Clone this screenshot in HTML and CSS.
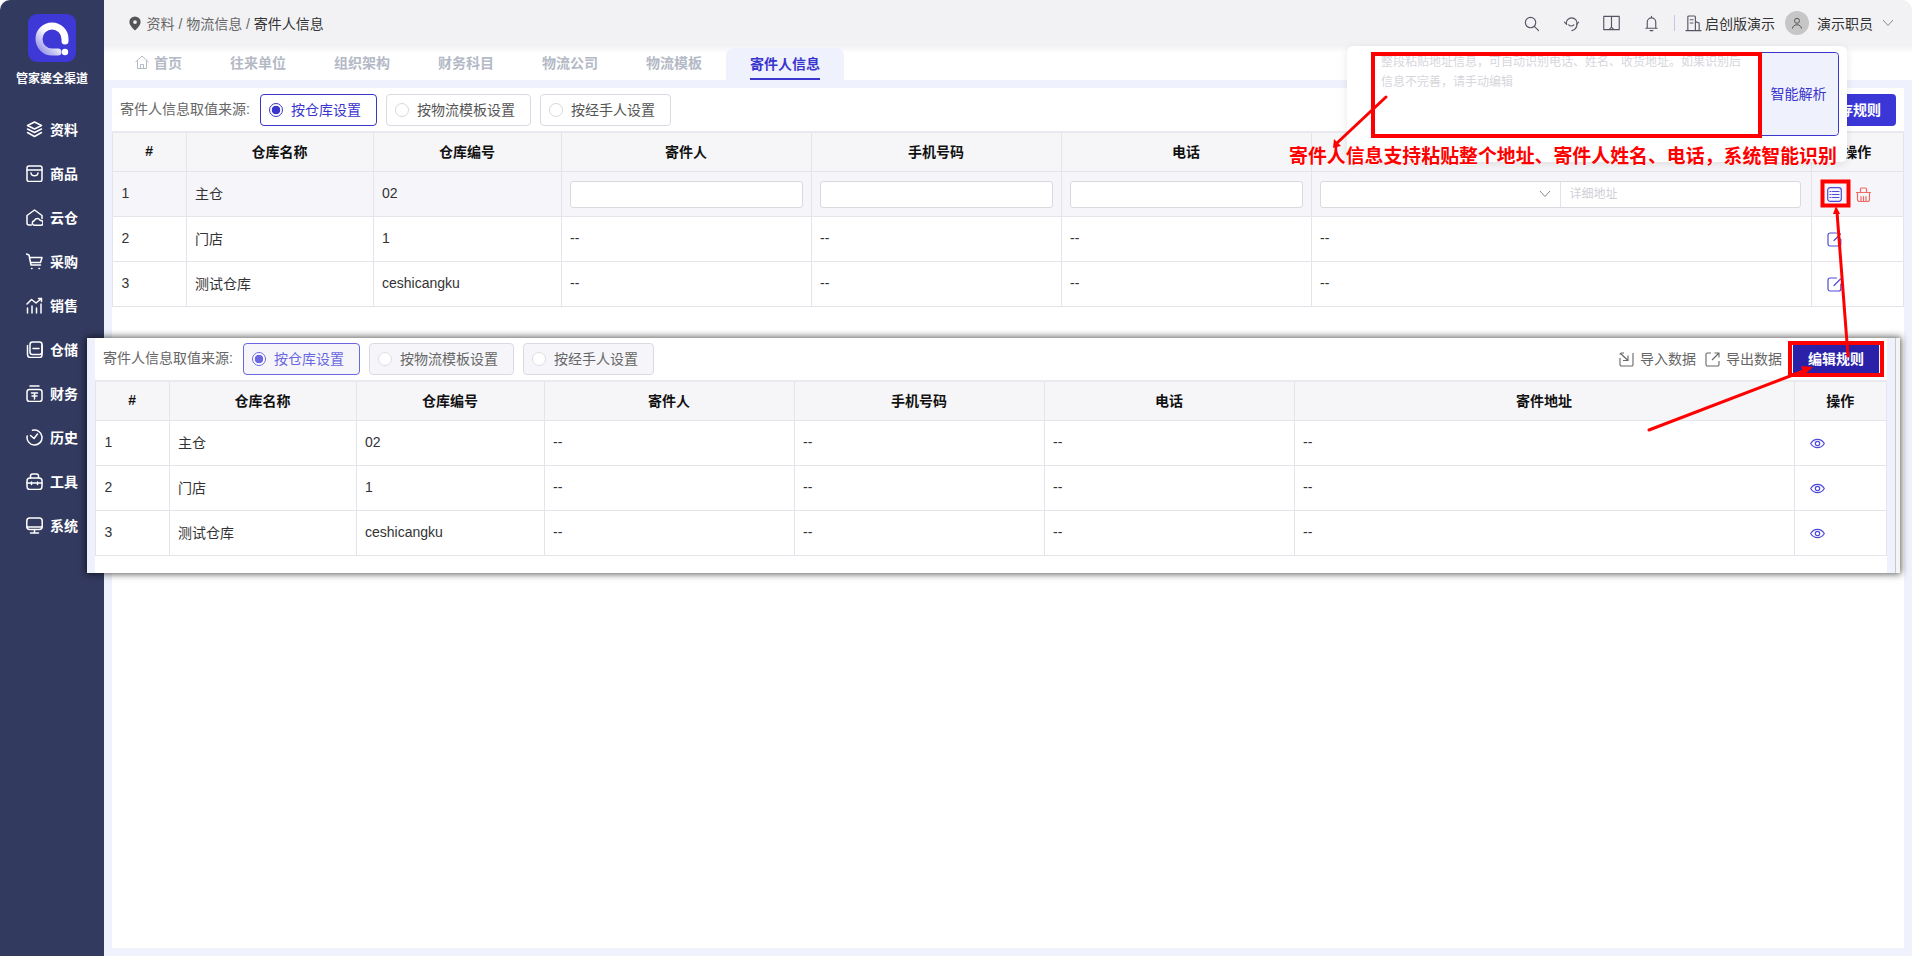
FILE: index.html
```html
<!DOCTYPE html>
<html lang="zh-CN">

<head>
    <meta charset="UTF-8">
    <meta name="viewport" content="width=device-width, initial-scale=1.0">
    <title>寄件人信息</title>
    <link rel="stylesheet" href="styles.css">
</head>

<body>

    <div class="app">
        <!-- Left navigation -->
        <aside class="sidebar">
            <div class="brand">
                <svg class="logo" viewBox="0 0 48 48">
                    <defs>
                        <linearGradient id="ringGrad" x1="1" y1="0" x2="0" y2="1">
                            <stop offset="0.45" stop-color="#ffffff"/>
                            <stop offset="1" stop-color="#8f8ce6"/>
                        </linearGradient>
                    </defs>
                    <rect width="48" height="48" rx="9" fill="#3d38d6"/>
                    <path d="M37 27V25A13 13 0 1 0 24 38H30" fill="none" stroke="url(#ringGrad)" stroke-width="7" stroke-linecap="round"/>
                    <circle cx="37" cy="38" r="3.2" fill="#fff"/>
                </svg>
                <div class="brand-name">管家婆全渠道</div>
            </div>
            <nav class="nav">
                <a class="nav-item"><svg viewBox="0 0 17 17"><path d="M8.500 1 15.500 4.500 8.500 8 1.500 4.500Z"/><path d="M1.500 8 8.500 11.500 15.500 8M1.500 11.500 8.500 15.500 15.500 11.500"/></svg>资料</a>
                <a class="nav-item"><svg viewBox="0 0 17 17"><rect x="1" y="1" width="15" height="15.500" rx="2"/><path d="M1 5h15M5 8c.5 3.800 6.500 3.800 7 0"/></svg>商品</a>
                <a class="nav-item"><svg viewBox="0 0 17 17"><path d="M5.500 16H3A2 2 0 0 1 1 14V6.500L8.500 1 16 6.500V9.500"/><path d="M8 16.200a2.300 2.300 0 0 1 .3-4.500 3.200 3.200 0 0 1 6-.1 2.300 2.300 0 0 1 .8 4.600Z"/></svg>云仓</a>
                <a class="nav-item"><svg viewBox="0 0 17 17"><path d="M.5 1 3 2l2 10h9.500M3.500 4.500H16L14.500 9.500H4.500"/><path d="M5.500 15.500h.5M13 15.500h.5"/></svg>采购</a>
                <a class="nav-item"><svg viewBox="0 0 17 17"><path d="M1.500 16v-5M6 16V9M10.500 16v-5M15 16V7"/><path d="M1 7 5.500 2.500 10 6 15.500 1.500M12.500 1.500h3v3"/></svg>销售</a>
                <a class="nav-item"><svg viewBox="0 0 17 17"><path d="M1.500 4.500v9a3 3 0 0 0 3 3h9a2.500 2.500 0 0 0 2.500-2.500V4"/><rect x="4" y="1" width="12" height="12.500" rx="2.500"/><path d="M7 7.500h6"/></svg>仓储</a>
                <a class="nav-item"><svg viewBox="0 0 17 17"><rect x="1" y="4.500" width="15" height="12" rx="2.500"/><path d="M4 1h9M5.500 8h6M8.500 8v6M6 11h5"/></svg>财务</a>
                <a class="nav-item"><svg viewBox="0 0 17 17"><path d="M6.500 1.300A7.500 7.500 0 1 1 1.200 7"/><path d="M11.500 5 8 9.500M8 9.500 4.500 6.500"/></svg>历史</a>
                <a class="nav-item"><svg viewBox="0 0 17 17"><rect x="1" y="5" width="15" height="11.500" rx="3"/><path d="M4.500 5V3a2 2 0 0 1 2-2h4a2 2 0 0 1 2 2v2M1 10h15M5.500 9v2.500M11.500 9v2.500"/></svg>工具</a>
                <a class="nav-item"><svg viewBox="0 0 17 17"><rect x=".8" y="1" width="15.400" height="11.500" rx="3"/><path d="M1 10h15M8.500 12.500v3M4.500 16h8"/></svg>系统</a>
            </nav>
        </aside>

        <div class="main">
            <!-- Top bar -->
            <header class="topbar">
                <div class="crumbs">
                    <svg class="pin" viewBox="0 0 14 16"><path d="M7 .5A6 6 0 0 0 1 6.500c0 4 6 9 6 9s6-5 6-9a6 6 0 0 0-6-6Z" fill="#555"/><circle cx="7" cy="6.500" r="2" fill="#f2f2f5"/></svg>
                    <span>资料 / 物流信息 / <b class="crumb-last">寄件人信息</b></span>
                </div>
                <div class="top-right">
                    <svg class="top-icon" viewBox="0 0 18 18"><circle cx="8" cy="8" r="5.500"/><path d="m12 12 4.500 4.500"/></svg>
                    <svg class="top-icon" viewBox="0 0 18 18"><path d="M3.500 9.500A5.700 5.700 0 1 1 14.800 9.500c0 3.500-2 6-5.300 7"/><path d="M1.500 7.500 4 10M16.500 7.500 14.500 10M6 10.500c1.500 1.500 4 1.500 5.500 0"/></svg>
                    <svg class="top-icon" viewBox="0 0 18 18"><path d="M.8 1.500h16.400v14H.8ZM9 1.500v11M6.500 15.500 9 12.800l2.500 2.700"/></svg>
                    <svg class="top-icon" viewBox="0 0 18 18"><path d="M4.500 14V7.500a4.500 4.500 0 0 1 9 0V14ZM3 14h12M7.500 16.500h3M9 1.500V3"/></svg>
                    <span class="top-divider"></span>
                    <svg class="top-icon company-icon" viewBox="0 0 18 18"><path d="M3 16.500V2a1 1 0 0 1 1-1h6a1 1 0 0 1 1 1v14.500M11 7l4 1.500v8M1 16.500h16M5.500 5h3M5.500 8.500h3"/></svg>
                    <span class="company">启创版演示</span>
                    <span class="avatar"><svg viewBox="0 0 12 12"><circle cx="6" cy="3.800" r="2.500"/><path d="M1.500 11.500c.3-5 8.700-5 9 0"/></svg></span>
                    <span class="user">演示职员</span>
                    <svg class="chevron" viewBox="0 0 12 8"><path d="m1 1 5 5.500L11 1"/></svg>
                </div>
            </header>

            <!-- Page tabs -->
            <div class="tabs">
                <a class="tab"><svg class="home-icon" viewBox="0 0 14 14"><path d="M.5 7 7 1l6.500 6M2.500 5.500v8h9v-8M5.500 13.500v-4h3v4"/></svg>首页</a>
                <a class="tab">往来单位</a>
                <a class="tab">组织架构</a>
                <a class="tab">财务科目</a>
                <a class="tab">物流公司</a>
                <a class="tab">物流模板</a>
                <a class="tab active"><span class="tab-text">寄件人信息</span></a>
            </div>

            <div class="content">
                <div class="card">
                    <div class="toolbar">
                        <span class="toolbar-label">寄件人信息取值来源:</span>
                        <label class="radio-btn checked"><i class="radio"></i>按仓库设置</label>
                        <label class="radio-btn"><i class="radio"></i>按物流模板设置</label>
                        <label class="radio-btn"><i class="radio"></i>按经手人设置</label>
                        <span class="toolbar-right">
                            <button class="primary-btn">保存规则</button>
                        </span>
                    </div>
                    <div class="table-wrap">
                        <table class="grid">
                            <colgroup>
                                <col class="c-no"><col class="c-name"><col class="c-code"><col class="c-cell"><col class="c-cell"><col class="c-cell"><col class="c-addr"><col class="c-op">
                            </colgroup>
                            <thead>
                                <tr><th>#</th><th>仓库名称</th><th>仓库编号</th><th>寄件人</th><th>手机号码</th><th>电话</th><th></th><th>操作</th></tr>
                            </thead>
                            <tbody>
                                <tr class="editing">
                                    <td>1</td><td>主仓</td><td>02</td>
                                    <td class="input-cell"><div class="text-input"></div></td>
                                    <td class="input-cell"><div class="text-input"></div></td>
                                    <td class="input-cell"><div class="text-input"></div></td>
                                    <td class="input-cell">
                                        <div class="addr-input">
                                            <span class="addr-select"><svg class="chevron" viewBox="0 0 12 8"><path d="m1 1 5 5.500L11 1"/></svg></span>
                                            <span class="addr-detail">详细地址</span>
                                        </div>
                                    </td>
                                    <td>
                                        <div class="ops">
                                            <svg class="op-icon" viewBox="0 0 15 15"><rect x=".7" y=".7" width="13.600" height="13.600" rx="2.500"/><path d="M3 4.500h1M5.500 4.500h6.500M3 7.500h1M5.500 7.500h6.500M3 10.500h1M5.500 10.500h6.500"/></svg>
                                            <svg class="op-icon danger" viewBox="0 0 15 15"><path d="M1.500 5.500h12v7a2 2 0 0 1-2 2h-8a2 2 0 0 1-2-2ZM.5 5.500h14M4.500 5.500V2a1 1 0 0 1 1-1h4a1 1 0 0 1 1 1v3.500M5 9.500v5M7.500 9.500v5M10 9.500v5"/></svg>
                                        </div>
                                    </td>
                                </tr>
                                <tr>
                                    <td>2</td><td>门店</td><td>1</td><td>--</td><td>--</td><td>--</td><td>--</td>
                                    <td><div class="ops"><svg class="op-icon" viewBox="0 0 15 15"><path d="M13.800 7v5a2 2 0 0 1-2 2H3a2 2 0 0 1-2-2V3a2 2 0 0 1 2-2h6.500M7 8.500 13.500 2"/></svg></div></td>
                                </tr>
                                <tr>
                                    <td>3</td><td>测试仓库</td><td>ceshicangku</td><td>--</td><td>--</td><td>--</td><td>--</td>
                                    <td><div class="ops"><svg class="op-icon" viewBox="0 0 15 15"><path d="M13.800 7v5a2 2 0 0 1-2 2H3a2 2 0 0 1-2-2V3a2 2 0 0 1 2-2h6.500M7 8.500 13.500 2"/></svg></div></td>
                                </tr>
                            </tbody>
                        </table>
                    </div>
                </div>
            </div>
        </div>
    </div>

    <!-- Pasted screenshot of the read-only state -->
    <div class="shot">
        <div class="shot-strip"></div>
        <div class="shot-body">
            <div class="toolbar">
                <span class="toolbar-label">寄件人信息取值来源:</span>
                <label class="radio-btn checked"><i class="radio"></i>按仓库设置</label>
                <label class="radio-btn"><i class="radio"></i>按物流模板设置</label>
                <label class="radio-btn"><i class="radio"></i>按经手人设置</label>
                <span class="toolbar-right">
                    <a class="tool-link"><svg viewBox="0 0 15 15"><path d="M5 1H2.500A1.500 1.500 0 0 0 1 2.500M1 6v6.500A1.500 1.500 0 0 0 2.500 14h10a1.500 1.500 0 0 0 1.500-1.500V1M1.500 1.500 8.500 8M9 3.500V8.500H4"/></svg>导入数据</a>
                    <a class="tool-link"><svg viewBox="0 0 15 15"><path d="M6 1H2.500A1.500 1.500 0 0 0 1 2.500v10A1.500 1.500 0 0 0 2.500 14h10a1.500 1.500 0 0 0 1.500-1.500V9M7 8l7-7M9.500 1H14v4.500"/></svg>导出数据</a>
                    <button class="primary-btn dark">编辑规则</button>
                </span>
            </div>
            <div class="table-wrap">
                <table class="grid">
                    <colgroup>
                        <col class="c-no"><col class="c-name"><col class="c-code"><col class="c-cell"><col class="c-cell"><col class="c-cell"><col class="c-addr"><col class="c-op">
                    </colgroup>
                    <thead>
                        <tr><th>#</th><th>仓库名称</th><th>仓库编号</th><th>寄件人</th><th>手机号码</th><th>电话</th><th>寄件地址</th><th>操作</th></tr>
                    </thead>
                    <tbody>
                        <tr>
                            <td>1</td><td>主仓</td><td>02</td><td>--</td><td>--</td><td>--</td><td>--</td>
                            <td><div class="ops"><svg class="op-icon" viewBox="0 0 15 15"><path d="M.7 7.500C4 2 11 2 14.300 7.500 11 13 4 13 .7 7.500Z"/><circle cx="7.500" cy="7.500" r="2.200"/></svg></div></td>
                        </tr>
                        <tr>
                            <td>2</td><td>门店</td><td>1</td><td>--</td><td>--</td><td>--</td><td>--</td>
                            <td><div class="ops"><svg class="op-icon" viewBox="0 0 15 15"><path d="M.7 7.500C4 2 11 2 14.300 7.500 11 13 4 13 .7 7.500Z"/><circle cx="7.500" cy="7.500" r="2.200"/></svg></div></td>
                        </tr>
                        <tr>
                            <td>3</td><td>测试仓库</td><td>ceshicangku</td><td>--</td><td>--</td><td>--</td><td>--</td>
                            <td><div class="ops"><svg class="op-icon" viewBox="0 0 15 15"><path d="M.7 7.500C4 2 11 2 14.300 7.500 11 13 4 13 .7 7.500Z"/><circle cx="7.500" cy="7.500" r="2.200"/></svg></div></td>
                        </tr>
                    </tbody>
                </table>
            </div>
        </div>
        <div class="shot-strip"></div>
        <div class="shot-edge"></div>
    </div>

    <!-- Smart paste popup -->
    <div class="popup">
        <div class="paste-box">
            <div class="paste-text">整段粘贴地址信息，可自动识别电话、姓名、收货地址。如果识别后信息不完善，请手动编辑</div>
            <div class="paste-btn">智能解析</div>
        </div>
    </div>

    <!-- Red annotations -->
    <div class="note">寄件人信息支持粘贴整个地址、寄件人姓名、电话，系统智能识别</div>
    <svg class="marks" viewBox="0 0 1912 956">
        <rect x="1373" y="54" width="387" height="82"/>
        <rect x="1822.500" y="181.500" width="26" height="24"/>
        <rect x="1790" y="343" width="92" height="32"/>
        <path d="M1386 97 1337 143"/>
        <path d="M1848 356 1837 212"/>
        <path d="M1649 430 1806 370"/>
        <polygon points="1333,148 1334,139 1341,146"/>
        <polygon points="1836,206 1833,214 1840,214"/>
        <polygon points="1813,367 1801,366 1804,375"/>
    </svg>

</body>
</html>
```

FILE: styles.css
```css
* {
    box-sizing: border-box;
}

html, body {
    margin: 0;
    padding: 0;
    height: 100%;
    overflow: hidden;
    background-color: #fff;
}

body {
    font-family: "Liberation Sans", "Noto Sans CJK SC", sans-serif;
    font-size: 14px;
    color: #333;
}

.app {
    display: flex;
    width: 1912px;
    height: 956px;
}

/* Sidebar */
.sidebar {
    width: 104px;
    flex-shrink: 0;
    background-color: #333a5f;
    border-top-left-radius: 10px;
    color: #fff;
}

.brand {
    height: 108px;
    padding-top: 14px;
    display: flex;
    flex-direction: column;
    align-items: center;
}

.logo {
    width: 48px;
    height: 48px;
}

.brand-name {
    margin-top: 9px;
    line-height: 16px;
    font-size: 12px;
    font-weight: bold;
}

.nav-item {
    height: 44px;
    padding-left: 25.500px;
    padding-bottom: 2px;
    display: flex;
    align-items: center;
    gap: 7.500px;
    font-weight: bold;
}

.nav-item svg {
    width: 17px;
    height: 17px;
    fill: none;
    stroke: #fff;
    stroke-width: 1.500;
    stroke-linecap: round;
    stroke-linejoin: round;
}

/* Main column */
.main {
    flex: 1;
    min-width: 0;
    display: flex;
    flex-direction: column;
}

.topbar {
    height: 46px;
    padding-left: 24px;
    padding-right: 18px;
    display: flex;
    align-items: center;
    justify-content: space-between;
    background-color: #f2f2f5;
    border-top-right-radius: 10px;
}

.crumbs {
    display: flex;
    align-items: center;
    gap: 4.500px;
    color: #666;
}

.pin {
    width: 14px;
    height: 15px;
}

.crumb-last {
    font-weight: normal;
    color: #333;
}

.top-right {
    display: flex;
    align-items: center;
}

.top-icon {
    width: 17px;
    height: 17px;
    margin-right: 23px;
    fill: none;
    stroke: #555566;
    stroke-width: 1.200;
    stroke-linecap: round;
    stroke-linejoin: round;
}

.top-divider {
    width: 1px;
    height: 16px;
    margin-left: -9px;
    margin-right: 10px;
    background-color: #c4c8e6;
}

.company-icon {
    margin-right: 3px;
}

.avatar {
    width: 24px;
    height: 24px;
    margin-left: 10px;
    margin-right: 8px;
    border-radius: 50%;
    background-color: #c6c6c6;
    display: flex;
    align-items: center;
    justify-content: center;
}

.avatar svg {
    width: 12px;
    height: 12px;
    fill: none;
    stroke: #555;
    stroke-width: 1;
}

.chevron {
    width: 12px;
    height: 8px;
    margin-left: 9px;
    fill: none;
    stroke: #888;
    stroke-width: 1;
}

/* Tabs */
.tabs {
    height: 34px;
    padding-left: 7px;
    display: flex;
    background: linear-gradient(#f2f2f5, #fff 7px);
}

.tab {
    padding: 0 24px 2px;
    display: flex;
    align-items: center;
    font-weight: bold;
    color: #b4b9c6;
}

.home-icon {
    width: 14px;
    height: 14px;
    margin-right: 5px;
    fill: none;
    stroke: #b4b9c6;
    stroke-width: 1;
}

.tab.active {
    margin-top: 2px;
    padding-bottom: 0;
    background-color: #eff1fd;
    border-radius: 8px 8px 0 0;
    color: #3a35cc;
}

.tab-text {
    height: 100%;
    padding-bottom: 1px;
    display: flex;
    align-items: center;
    border-bottom: 2px solid #3a35cc;
}

/* Content */
.content {
    flex: 1;
    padding: 8px;
    background-color: #eff1fd;
}

.card {
    height: 100%;
    background-color: #fff;
}

.toolbar {
    height: 43px;
    padding: 6px 8px 0;
    display: flex;
    align-items: flex-start;
    gap: 9px;
}

.toolbar-label {
    margin-right: 1px;
    line-height: 30px;
    color: #666;
}

.radio-btn {
    height: 32px;
    padding: 0 15px 2px 8px;
    display: flex;
    align-items: center;
    gap: 8px;
    border: 1px solid #dadae2;
    border-radius: 4px;
    color: #555;
}

.radio {
    width: 14px;
    height: 14px;
    margin-top: 2px;
    border: 1px solid #d8d8de;
    border-radius: 50%;
    background-color: #fff;
}

.radio-btn.checked {
    border-color: #3a35cc;
    color: #3a35cc;
}

.radio-btn.checked .radio {
    border: 1.300px solid #3a35cc;
    background: radial-gradient(circle, #3a35cc 0 4px, #fff 4.600px);
}

.toolbar-right {
    margin-left: auto;
    display: flex;
    align-items: center;
}

.primary-btn {
    width: 86px;
    height: 32px;
    padding: 0 0 2px;
    border: none;
    border-radius: 4px;
    background-color: #3b37d6;
    color: #fff;
    font-family: inherit;
    font-size: 14px;
    font-weight: bold;
}

.primary-btn.dark {
    margin-left: 11px;
    border-radius: 0;
    background-color: #2b21a8;
}

.table-wrap {
    border-top: 2px solid #e9e9ef;
}

/* Table */
.grid {
    width: 100%;
    table-layout: fixed;
    border-collapse: separate;
    border-spacing: 0;
}

.c-no { width: 74.500px; }
.c-name { width: 187px; }
.c-code { width: 188px; }
.c-cell { width: 250px; }
.c-addr { width: 500px; }

.grid th, .grid td {
    border-right: 1px solid #e4e4ea;
    border-bottom: 1px solid #e4e4ea;
}

.grid th:first-child, .grid td:first-child {
    border-left: 1px solid #e4e4ea;
}

.grid th {
    height: 39px;
    padding: 0 0 3px;
    background-color: #f6f6f9;
    color: #111;
    font-weight: bold;
    text-align: center;
}

.grid td {
    height: 45px;
    padding: 0 8px 2px 8.500px;
    text-align: left;
}

.editing td {
    background-color: #f6f6fa;
}

.grid td.input-cell {
    padding: 0 8px;
}

.text-input {
    height: 27px;
    border: 1px solid #d9d9e0;
    border-radius: 3px;
    background-color: #fff;
}

.addr-input {
    display: flex;
    width: 481px;
    height: 27px;
    border: 1px solid #d9d9e0;
    border-radius: 3px;
    background-color: #fff;
}

.addr-select {
    width: 240px;
    display: flex;
    align-items: center;
    justify-content: flex-end;
    padding-right: 9px;
    border-right: 1px solid #e2e2e8;
}

.addr-detail {
    padding-left: 9px;
    line-height: 25px;
    font-size: 12px;
    color: #cfcfd6;
}

.ops {
    margin-top: 2px;
    padding-left: 7px;
    display: flex;
    align-items: center;
    gap: 14px;
}

.op-icon {
    width: 15px;
    height: 15px;
    fill: none;
    stroke: #4f4bd8;
    stroke-width: 1.200;
    stroke-linecap: round;
    stroke-linejoin: round;
}

.op-icon.danger {
    stroke: #ee6a62;
}

/* Screenshot pasted over the page */
.shot {
    position: absolute;
    left: 87px;
    top: 338px;
    width: 1813px;
    height: 235px;
    display: flex;
    background-color: #fff;
    box-shadow: 0 0 7px 1px rgba(0, 0, 0, 0.65);
}

.shot-strip {
    width: 8px;
    flex-shrink: 0;
    background-color: #eff1fd;
}

.shot-body {
    width: 1792px;
    flex-shrink: 0;
}

.shot-edge {
    flex: 1;
    border-left: 1px solid #c8c8c8;
    background-color: #f4f4f4;
}

.shot .toolbar {
    height: 42px;
    padding-top: 5px;
}

.shot .radio-btn {
    background-color: #f6f6fa;
    color: #666;
}

.shot .radio-btn.checked {
    border-color: #6a67e0;
    color: #6a67e0;
}

.shot .radio {
    border-color: #dedee4;
}

.shot .radio-btn.checked .radio {
    border-color: #6a67e0;
    background: radial-gradient(circle, #6a67e0 0 4px, #fff 4.600px);
}

.tool-link {
    margin-left: 9px;
    padding-bottom: 2px;
    display: flex;
    align-items: center;
    gap: 6px;
    color: #666;
}

.tool-link svg {
    width: 15px;
    height: 15px;
    margin-top: 2px;
    fill: none;
    stroke: #666;
    stroke-width: 1.100;
}

/* Popup */
.popup {
    position: absolute;
    left: 1347px;
    top: 46px;
    width: 500px;
    height: 116px;
    padding: 6px 8px 0 24px;
    background-color: #fff;
    border-radius: 6px;
    box-shadow: 0 2px 8px rgba(0, 0, 0, 0.1);
}

.paste-box {
    height: 84px;
    display: flex;
    border: 1px solid #3a35cc;
    border-radius: 4px;
}

.paste-text {
    flex: 1;
    margin-top: -1px;
    padding: 0 15px 0 9px;
    line-height: 20px;
    font-size: 12px;
    color: #d6d6dc;
}

.paste-btn {
    width: 79px;
    padding-bottom: 2px;
    display: flex;
    align-items: center;
    justify-content: center;
    background-color: #eff1fd;
    border-radius: 0 4px 4px 0;
    color: #3a35cc;
}

/* Annotations */
.note {
    position: absolute;
    left: 1289px;
    top: 144px;
    line-height: 26px;
    font-size: 18.900px;
    font-weight: bold;
    color: #f00;
    white-space: nowrap;
    text-shadow: 0 0 2px #fff, 0 0 2px #fff;
}

.marks {
    position: absolute;
    left: 0;
    top: 0;
    width: 1912px;
    height: 956px;
    pointer-events: none;
}

.marks rect {
    fill: none;
    stroke: #f00;
    stroke-width: 4;
}

.marks path {
    fill: none;
    stroke: #f00;
    stroke-width: 3;
    stroke-linecap: round;
}

.marks polygon {
    fill: #f00;
}
```
